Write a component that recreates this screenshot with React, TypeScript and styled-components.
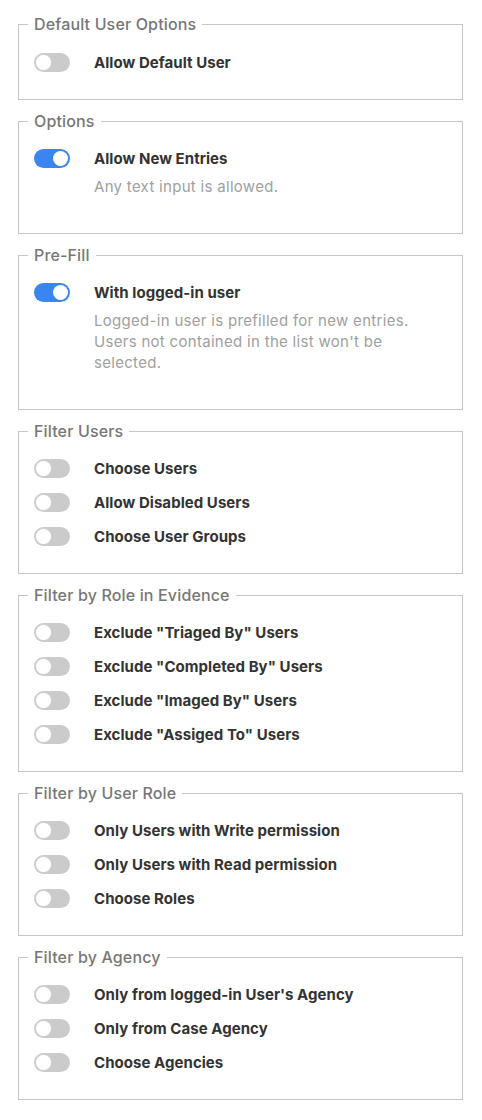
import React from "react";
import styled, { createGlobalStyle } from "styled-components";

const GlobalStyle = createGlobalStyle`
  html, body {
    margin: 0;
    padding: 0;
    background: #ffffff;
    font-family: Inter, Roboto, "Liberation Sans", Arial, sans-serif;
  }
  * { box-sizing: border-box; }
`;

const Page = styled.div`
  width: 482px;
  padding: 14px 19px 12px 18px;
  display: flex;
  flex-direction: column;
  gap: 11px;
`;

const Group = styled.fieldset<{ $roomy?: boolean }>`
  margin: 0;
  padding: ${(p) => (p.$roomy ? "11px 15px 20px 15px" : "10px 15px 20px 15px")};
  border: 1px solid #c6c6c6;
  min-width: 0;
`;

const Legend = styled.legend`
  margin-left: -6px;
  padding: 0 6px;
  font-size: 16px;
  line-height: 20px;
  font-weight: 500;
  letter-spacing: 0.15px;
  color: #777777;
`;

const Row = styled.div`
  display: flex;
  align-items: center;
  height: 34px;
`;

const Track = styled.span<{ $on: boolean }>`
  position: relative;
  display: inline-block;
  flex: 0 0 auto;
  width: 36px;
  height: 19px;
  border-radius: 10px;
  background: ${(p) => (p.$on ? "#3a86ee" : "#cbcbcb")};
`;

const Thumb = styled.span<{ $on: boolean }>`
  position: absolute;
  top: 2px;
  left: ${(p) => (p.$on ? "19px" : "2px")};
  width: 15px;
  height: 15px;
  border-radius: 50%;
  background: #ffffff;
  box-shadow: ${(p) => (p.$on ? "none" : "0 0 0 0.5px #d8d8d8")};
`;

const Label = styled.span`
  margin-left: 24px;
  font-size: 15px;
  font-weight: 700;
  letter-spacing: 0.05px;
  color: #333333;
  white-space: nowrap;
`;

const Help = styled.div`
  margin: 1px 0 0 60px;
  padding-bottom: 16px;
  font-size: 15px;
  line-height: 21px;
  letter-spacing: 0.3px;
  color: #a0a0a0;
`;

type Item = { label: string; on?: boolean; help?: string };
type Section = { title: string; items: Item[] };

const sections: Section[] = [
  { title: "Default User Options", items: [{ label: "Allow Default User" }] },
  {
    title: "Options",
    items: [{ label: "Allow New Entries", on: true, help: "Any text input is allowed." }],
  },
  {
    title: "Pre-Fill",
    items: [
      {
        label: "With logged-in user",
        on: true,
        help: "Logged-in user is prefilled for new entries. Users not contained in the list won't be selected.",
      },
    ],
  },
  {
    title: "Filter Users",
    items: [
      { label: "Choose Users" },
      { label: "Allow Disabled Users" },
      { label: "Choose User Groups" },
    ],
  },
  {
    title: "Filter by Role in Evidence",
    items: [
      { label: 'Exclude "Triaged By" Users' },
      { label: 'Exclude "Completed By" Users' },
      { label: 'Exclude "Imaged By" Users' },
      { label: 'Exclude "Assiged To" Users' },
    ],
  },
  {
    title: "Filter by User Role",
    items: [
      { label: "Only Users with Write permission" },
      { label: "Only Users with Read permission" },
      { label: "Choose Roles" },
    ],
  },
  {
    title: "Filter by Agency",
    items: [
      { label: "Only from logged-in User's Agency" },
      { label: "Only from Case Agency" },
      { label: "Choose Agencies" },
    ],
  },
];

const Toggle = ({ on }: { on: boolean }) => (
  <Track $on={on} role="switch" aria-checked={on}>
    <Thumb $on={on} />
  </Track>
);

export default function App() {
  return (
    <>
      <GlobalStyle />
      <Page>
        {sections.map((s, i) => (
          <Group key={s.title} $roomy={i === 0}>
            <Legend>{s.title}</Legend>
            {s.items.map((it) => (
              <React.Fragment key={it.label}>
                <Row>
                  <Toggle on={!!it.on} />
                  <Label>{it.label}</Label>
                </Row>
                {it.help && <Help>{it.help}</Help>}
              </React.Fragment>
            ))}
          </Group>
        ))}
      </Page>
    </>
  );
}
